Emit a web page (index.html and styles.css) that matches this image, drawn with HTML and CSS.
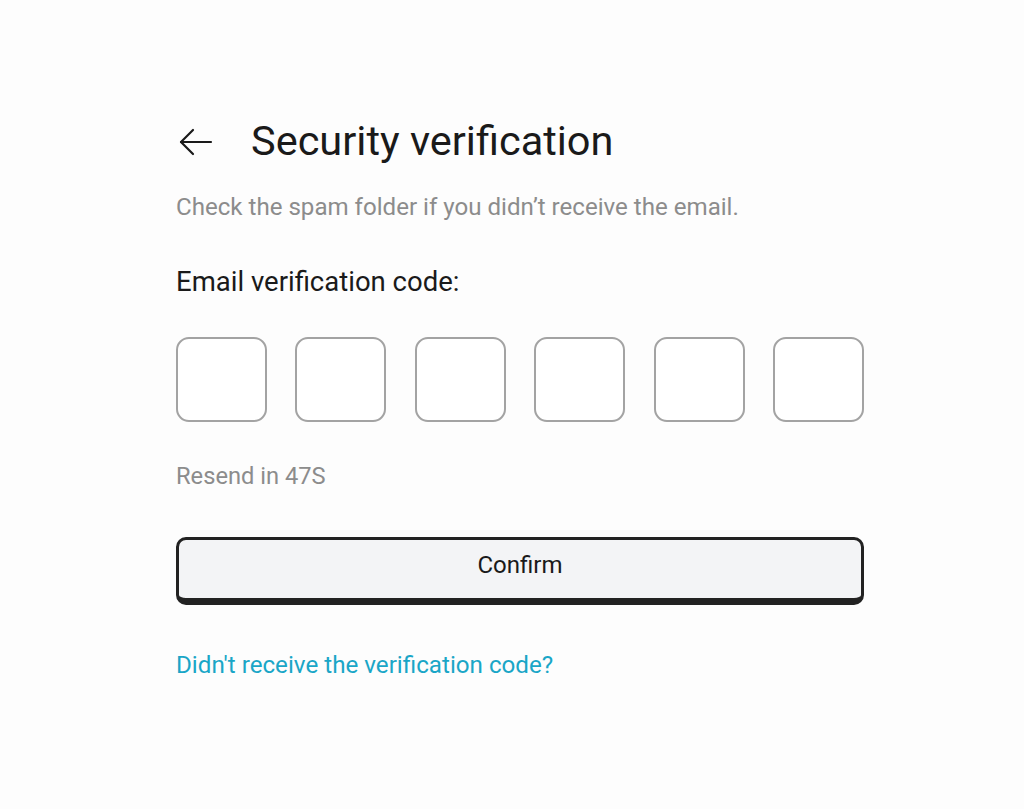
FILE: index.html
```html
<!DOCTYPE html>
<html lang="en">
<head>
<meta charset="utf-8">
<title>Security verification</title>
<link rel="stylesheet" href="styles.css">
</head>
<body>
<main class="page">
  <div class="card">
    <header class="head">
      <button class="back" aria-label="Back">
        <svg width="34" height="28" viewBox="0 0 34 28" fill="none" stroke="#1a1a1a" stroke-width="2.2" stroke-linecap="round" stroke-linejoin="round">
          <path d="M32 14H2"/>
          <path d="M14 2L2 14l12 12"/>
        </svg>
      </button>
      <h1 class="title">Security verification</h1>
    </header>
    <p class="hint">Check the spam folder if you didn’t receive the email.</p>
    <p class="label">Email verification code:</p>
    <div class="codes">
      <input class="code" maxlength="1">
      <input class="code" maxlength="1">
      <input class="code" maxlength="1">
      <input class="code" maxlength="1">
      <input class="code" maxlength="1">
      <input class="code" maxlength="1">
    </div>
    <p class="resend">Resend in 47S</p>
    <button class="confirm">Confirm</button>
    <a class="help" href="#">Didn't receive the verification code?</a>
  </div>
</main>
</body>
</html>
```
FILE: styles.css
```css
* { box-sizing: border-box; }
html, body {
  margin: 0;
  background: #fdfdfd;
  font-family: Roboto, "Liberation Sans", sans-serif;
}
.page {
  padding: 116px 0 0 176px;
}
.card {
  width: 688px;
  display: flex;
  flex-direction: column;
}
.head {
  display: flex;
  align-items: center;
  gap: 38px;
  height: 50px;
}
.back {
  border: 0;
  background: none;
  padding: 0;
  margin-left: 3px;
  margin-top: 2px;
  display: flex;
  cursor: pointer;
}
.title {
  margin: 0;
  font-size: 41.5px;
  font-weight: 400;
  color: #1a1a1a;
  line-height: 50px;
}
.hint {
  margin: 26px 0 0;
  font-size: 24.1px;
  line-height: 30px;
  color: #8c8c8c;
}
.label {
  margin: 45px 0 0;
  font-size: 27.5px;
  line-height: 30px;
  color: #1a1a1a;
}
.codes {
  margin-top: 40px;
  display: flex;
  gap: 28.4px;
}
.code {
  flex: 1 1 0;
  min-width: 0;
  height: 85px;
  border: 2px solid #a3a3a3;
  border-radius: 13px;
  background: #fff;
  font: inherit;
  font-size: 32px;
  text-align: center;
}
.resend {
  margin: 39px 0 0;
  font-size: 23.7px;
  line-height: 30px;
  color: #8c8c8c;
}
.confirm {
  margin-top: 46px;
  height: 68px;
  border: 3px solid #222;
  border-bottom-width: 7px;
  border-radius: 10px;
  background: #f3f4f6;
  font-family: Roboto, "Liberation Sans", sans-serif;
  font-size: 24px;
  color: #1a1a1a;
  cursor: pointer;
  padding: 0 0 8px;
}
.help {
  margin-top: 45px;
  font-size: 24.2px;
  line-height: 30px;
  color: #1aa6c7;
  text-decoration: none;
  align-self: flex-start;
}
```
